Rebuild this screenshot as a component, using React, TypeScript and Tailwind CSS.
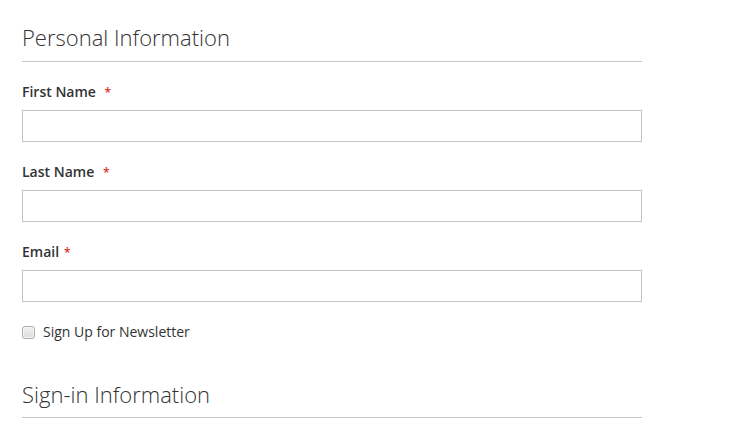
import React from "react";

function Field({ label, extraSpace }: { label: string; extraSpace?: boolean }) {
  return (
    <div className="flex flex-col">
      <label className="block h-[20px] text-[14px] leading-[20px] font-semibold text-[#333333] mb-[8px]">
        {label}
        {extraSpace ? "\u00a0" : ""}
        <span className="text-[#e02b27] text-[12px] leading-none ml-[5px]">*</span>
      </label>
      <input
        type="text"
        className="h-[32px] w-full border border-[#c2c2c2] bg-white outline-none"
      />
    </div>
  );
}

export default function App() {
  return (
    <div
      className="min-h-[423px] bg-white text-[#333333]"
      style={{ fontFamily: '"Open Sans", "Noto Sans", sans-serif' }}
    >
      <div className="w-[620px] ml-[22px] pt-[25px] flex flex-col">
        <div className="text-[22px] leading-[24px] font-light pb-[12px] border-b border-[#c6c6c6]">
          Personal Information
        </div>
        <div className="mt-[20px] flex flex-col gap-[20px]">
          <Field label="First Name" extraSpace />
          <Field label="Last Name" extraSpace />
          <Field label="Email" />
        </div>
        <div className="mt-[20px] flex items-center h-[20px]">
          <span className="w-[13px] h-[13px] rounded-[3px] border border-[#ababab] bg-gradient-to-b from-[#f2f2f2] to-[#dcdcdc] shadow-[inset_0_0_0_1px_#f7f7f7]" />
          <span className="ml-[8px] text-[14px] leading-[20px] text-[#333333]">
            Sign Up for Newsletter
          </span>
        </div>
        <div className="mt-[40px] text-[22px] leading-[24px] font-light pb-[11px] border-b border-[#c6c6c6]">
          Sign-in Information
        </div>
      </div>
    </div>
  );
}
